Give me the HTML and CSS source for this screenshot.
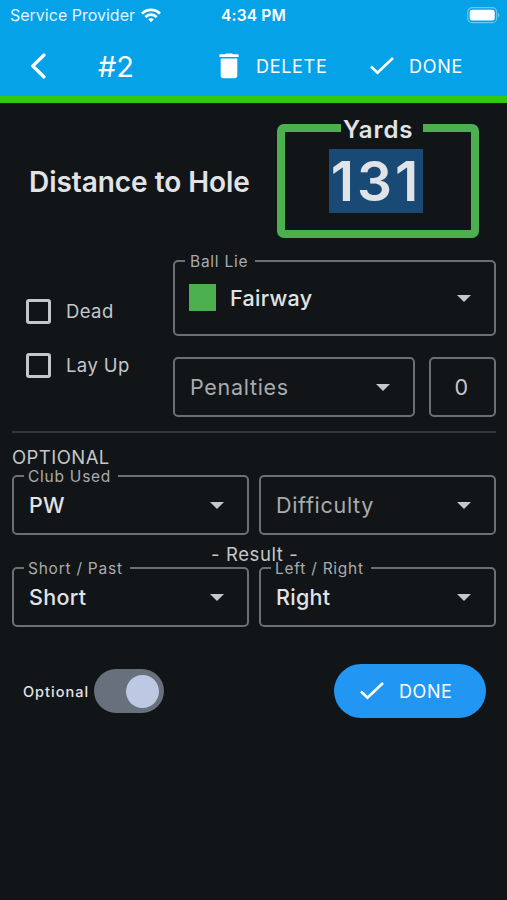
FILE: index.html
```html
<!DOCTYPE html>
<html lang="en">
<head>
  <meta charset="UTF-8">
  <meta name="viewport" content="width=device-width, initial-scale=1.0">
  <title>Shot #2</title>
  <link rel="stylesheet" href="styles.css">
</head>
<body>
  <header>
    <div class="status-bar">
      <span class="carrier">Service Provider</span>
      <svg class="wifi" width="20" height="15" viewBox="0 0 20 15" fill="none" stroke="#fff" stroke-width="2.7">
        <path d="M1 5.6C6 .6 14 .6 19 5.6"/>
        <path d="M4.3 9c3.2-3.2 8.2-3.2 11.4 0"/>
        <path d="M7.2 11.3c1.6-1.5 4-1.5 5.6 0L10 14.2z" fill="#fff" stroke="none"/>
      </svg>
      <span class="clock">4:34 PM</span>
      <svg class="battery" width="33" height="17" viewBox="0 0 33 17">
        <rect x=".7" y=".7" width="29" height="15" rx="4.5" fill="none" stroke="#fff" stroke-opacity=".4" stroke-width="1.2"/>
        <rect x="2.7" y="2.8" width="25" height="10.7" rx="2.5" fill="#fff"/>
        <path d="M31.2 6v4.5c1.7-.7 1.7-3.8 0-4.5z" fill="#fff" fill-opacity=".45"/>
      </svg>
    </div>
    <nav class="toolbar">
      <svg class="back" width="16" height="26" viewBox="0 0 16 26" fill="none" stroke="#fff" stroke-width="3.2" stroke-linecap="round" stroke-linejoin="round">
        <path d="M14 2 2.8 13 14 24"/>
      </svg>
      <h1>#2</h1>
      <a class="action delete">
        <svg width="20" height="26" viewBox="0 0 20 26" fill="#fff">
          <path d="M6 1.300Q6.500.5 7.500.5h5q1 0 1.500.8h5q.6 0 .6.600v2.200H.4V1.900q0-.6.6-.6z"/>
          <path d="M1.700 5.600h16.600v17q0 2.700-2.700 2.700H4.400q-2.700 0-2.700-2.700z"/>
        </svg>
        DELETE
      </a>
      <a class="action done">
        <svg width="24" height="18" viewBox="0 0 24 18" fill="none" stroke="#fff" stroke-width="2.6"><path d="M1 9.5 7.5 15.8 23 1"/></svg>
        DONE
      </a>
    </nav>
  </header>
  <main>
    <section class="distance">
      <h2>Distance to Hole</h2>
      <fieldset class="yards">
        <legend><span>Yards</span></legend>
        <span class="value">131</span>
      </fieldset>
    </section>
    <section class="lie">
      <div class="checks">
        <label><i class="box"></i>Dead</label>
        <label><i class="box"></i>Lay Up</label>
      </div>
      <div class="lie-fields">
        <fieldset class="field tall">
          <legend>Ball Lie</legend>
          <i class="swatch"></i><span class="text">Fairway</span>
          <i class="arrow"></i>
        </fieldset>
        <div class="penalties">
          <fieldset class="field empty"><span class="text">Penalties</span><i class="arrow"></i></fieldset>
          <fieldset class="field count"><span class="text">0</span></fieldset>
        </div>
      </div>
    </section>
    <hr>
    <p class="caption">OPTIONAL</p>
    <div class="pair">
      <fieldset class="field"><legend>Club Used</legend><span class="text">PW</span><i class="arrow"></i></fieldset>
      <fieldset class="field empty"><span class="text">Difficulty</span><i class="arrow"></i></fieldset>
    </div>
    <p class="caption result">- Result -</p>
    <div class="pair">
      <fieldset class="field"><legend>Short / Past</legend><span class="text">Short</span><i class="arrow"></i></fieldset>
      <fieldset class="field"><legend>Left / Right</legend><span class="text">Right</span><i class="arrow"></i></fieldset>
    </div>
    <footer>
      <span class="switch-label">Optional</span>
      <span class="switch"><i class="knob"></i></span>
      <button type="button">
        <svg width="24" height="18" viewBox="0 0 24 18" fill="none" stroke="#fff" stroke-width="2.6"><path d="M1 9.5 7.5 15.8 23 1"/></svg>
        DONE
      </button>
    </footer>
  </main>
</body>
</html>
```

FILE: styles.css
```css
* { box-sizing: border-box; font-family: Inter, sans-serif; }
body { margin: 0; min-height: 900px; background: #111518; color: #e2e3e7; }
h1, h2, p, fieldset, legend { margin: 0; padding: 0; }

header { height: 103px; background: #05a2e8; border-bottom: 7px solid #30cb0d; color: #fff; }
.status-bar { display: flex; align-items: center; height: 30px; padding: 0 7px 0 10px; }
.carrier { width: 125px; font-size: 16px; white-space: nowrap; color: #e3f5ff; }
.wifi { margin-left: 6px; }
.clock { margin-left: 60px; font-size: 15.5px; font-weight: 600; letter-spacing: 0.2px; white-space: nowrap; }
.battery { margin-left: auto; }
.toolbar { display: flex; align-items: center; height: 72px; padding-left: 30px; }
h1 { width: 37px; margin-left: 52px; font-size: 29px; font-weight: 400; white-space: nowrap; }
.action { display: flex; align-items: center; font-size: 18px; letter-spacing: 0.7px; }
.delete { gap: 17px; width: 151px; margin-left: 84px; }
.done { gap: 15px; }

main { padding: 21px 11px 0 12px; }
.distance { display: flex; align-items: center; height: 114px; padding: 0 17px; }
h2 { width: 248px; padding-top: 2px; font-size: 28px; font-weight: 600; letter-spacing: -0.05px; white-space: nowrap; }
.yards { width: 202px; height: 114px; border: 8px solid #4caf50; border-radius: 7px; }
.yards legend { height: 8px; margin-left: 56px; padding: 0 10px 0 2px; font-size: 24px; font-weight: 600; line-height: 8px; letter-spacing: 0.9px; }
.yards legend span { position: relative; top: 2px; }
.value { display: block; width: 94px; height: 64px; margin: 17px 0 0 44px; background: #184a75; font-size: 55px; font-weight: 600; line-height: 65px; letter-spacing: 3px; text-align: center; }

.lie { display: flex; margin-top: 22px; }
.checks { display: flex; flex-direction: column; gap: 28px; width: 161px; padding: 38px 0 0 14px; }
.checks label { display: flex; align-items: center; gap: 15px; height: 26px; font-size: 18.5px; letter-spacing: 0.4px; color: #c5c7ca; }
.box { width: 25px; height: 25px; border: 3px solid #c5c7ca; border-radius: 3px; }
.lie-fields { flex: 1; }
.penalties { display: grid; grid-template-columns: 242px 67px; gap: 14px; margin-top: 21px; }

.field { position: relative; width: 100%; min-width: 0; height: 60px; padding: 0 15px; border: 2px solid #6b7072; border-radius: 5px; }
.field legend { height: 2px; margin-left: -5px; padding: 0 7px 0 4px; font-size: 15.5px; line-height: 4px; letter-spacing: 0.75px; color: #a9abae; }
.field .text { font-size: 21.5px; font-weight: 500; line-height: 56px; letter-spacing: 0.3px; }
.field.empty .text { font-weight: 400; color: #a9abae; letter-spacing: 0.7px; }
.field.count { text-align: center; padding: 0 16px 0 14px; }
.field.count .text { font-weight: 400; color: #c5c7ca; }
.field.tall { height: 76px; }
.field.tall legend { padding-left: 5px; }
.field.tall .text { line-height: 72px; }
.swatch { display: inline-block; width: 27px; height: 27px; margin: 0 14px 0 -1px; background: #4caf50; vertical-align: -5px; }
.arrow { position: absolute; top: 50%; right: 23px; margin-top: -3px; border: 7px solid transparent; border-top-color: #c5c7ca; border-bottom: 0; }

hr { height: 2px; margin: 14px 0 12px; border: 0; background: #33373a; }
.caption { height: 30px; font-size: 18.5px; line-height: 24px; letter-spacing: 0.45px; color: #c5c7ca; }
.result { height: 32px; padding-top: 7px; padding-left: 199px; letter-spacing: 0.6px; }
.pair { display: grid; grid-template-columns: 237px 237px; gap: 10px; }

footer { display: flex; align-items: center; height: 54px; margin-top: 37px; padding: 0 10px 0 11px; }
.switch-label { width: 71px; font-size: 14.5px; font-weight: 500; letter-spacing: 1px; white-space: nowrap; }
.switch { display: flex; align-items: center; justify-content: flex-end; width: 70px; height: 44px; padding-right: 5px; border-radius: 22px; background: #68707c; }
.knob { width: 33px; height: 33px; border-radius: 50%; background: #bdc8e2; }
button { display: flex; align-items: center; gap: 15px; width: 152px; height: 54px; margin-left: auto; padding: 0 0 0 26px; border: 0; border-radius: 27px; background: #2196f3; color: #fff; font-size: 18px; letter-spacing: 0.6px; }
```
